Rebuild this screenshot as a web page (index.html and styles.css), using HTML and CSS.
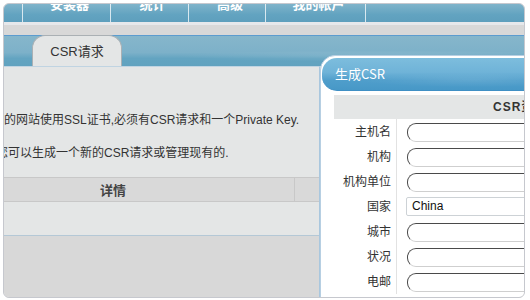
FILE: index.html
```html
<!DOCTYPE html>
<html lang="zh">
<head>
<meta charset="utf-8">
<title>CSR请求</title>
<link rel="stylesheet" href="styles.css">
</head>
<body>
<div class="frame">
  <nav class="nav">
    <div class="nav-lead"></div>
    <div class="nav-item w1"><span>安装器</span></div>
    <div class="nav-item w2"><span>统计</span></div>
    <div class="nav-item w3"><span>高级</span></div>
    <div class="nav-item w4 last"><span>我的帐户</span></div>
  </nav>
  <div class="strip"></div>
  <div class="band"></div>
  <div class="tabbar">
    <div class="tab">CSR请求</div>
  </div>
  <main class="panel">
    <div class="intro">
      <p class="line line1">要让您的网站使用SSL证书,必须有CSR请求和一个Private Key.</p>
      <p class="line line2">在这里您可以生成一个新的CSR请求或管理现有的.</p>
    </div>
    <div class="thead">
      <div class="th main">详情</div>
      <div class="th side"></div>
    </div>
    <div class="trow"></div>
    <div class="foot"></div>
  </main>

  <section class="dialog">
    <div class="dlg-head">生成CSR</div>
    <div class="dlg-body">
      <div class="sec-head">CSR资料</div>
      <div class="form">
        <div class="lbl">主机名</div><div class="fld"><span class="inp"></span></div>
        <div class="lbl">机构</div><div class="fld"><span class="inp"></span></div>
        <div class="lbl">机构单位</div><div class="fld"><span class="inp"></span></div>
        <div class="lbl">国家</div><div class="fld"><span class="sel">China</span></div>
        <div class="lbl">城市</div><div class="fld"><span class="inp"></span></div>
        <div class="lbl">状况</div><div class="fld"><span class="inp"></span></div>
        <div class="lbl">电邮</div><div class="fld"><span class="inp"></span></div>
      </div>
    </div>
  </section>
</div>
</body>
</html>
```
FILE: styles.css
```css
html, body {
  margin: 0;
  padding: 0;
  background: #ffffff;
}
body {
  font-family: "Liberation Sans", "Noto Sans CJK SC", sans-serif;
  font-size: 12px;
  color: #333;
}
.frame {
  position: relative;
  box-sizing: border-box;
  margin: 3px 0 0 3px;
  width: 522px;
  height: 295px;
  border: 1px solid #c6c8ce;
  border-radius: 6px;
  overflow: hidden;
  background: #d8d8d8;
}
.nav {
  display: flex;
  height: 18px;
  background: linear-gradient(#7fb3ca, #62a3c0 60%, #5e9fbd);
}
.nav-lead { width: 18px; }
.nav-item {
  display: flex;
  justify-content: center;
  align-items: flex-start;
  border-left: 1px solid rgba(255,255,255,0.75);
  color: #fff;
  font-weight: bold;
  font-size: 13px;
}
.nav-item span {
  margin-top: -6px;
  line-height: 13px;
  padding-left: 6px;
}
.nav-item.last { border-right: 1px solid rgba(255,255,255,0.75); }
.w1 { width: 87px; }
.w2 { width: 77px; }
.w3 { width: 76px; }
.w4 { width: 99px; }
.strip { height: 3px; background: #e6e8eb; }
.band { height: 10px; background: #d8d8d8; }
.tabbar {
  height: 30px;
  border-top: 1px solid #5c9ccf;
  background:
    radial-gradient(ellipse 300px 8px at 380px 20px, rgba(255,255,255,0.12), rgba(255,255,255,0) 70%),
    linear-gradient(#86b6cb, #7db1c9 55%, #63a4c1 75%, #61a2bf);
  display: flex;
  align-items: flex-end;
  padding-left: 28px;
}
.tab {
  box-sizing: border-box;
  width: 90px;
  height: 31px;
  border: 1px solid #aab0b4;
  border-bottom: none;
  border-radius: 13px 13px 0 0;
  background: #e4e6e6;
  color: #333;
  font-size: 13px;
  text-align: center;
  line-height: 32px;
}
.panel {
  box-sizing: border-box;
  width: 316px;
  height: 231px;
  border-right: 1px solid #a9c7de;
  border-top: 1px solid #c0d4e2;
  background: #e4e6e6;
  display: flex;
  flex-direction: column;
  border-bottom-left-radius: 5px;
  overflow: hidden;
}
.intro {
  height: 110px;
  padding-top: 45px;
  box-sizing: border-box;
  white-space: nowrap;
}
.line {
  margin: 0;
  line-height: 16px;
  font-size: 12px;
  color: #333;
}
.line1 { margin-left: -36px; }
.line2 { margin-left: -44px; margin-top: 17px; }
.thead {
  display: flex;
  height: 25px;
  box-sizing: border-box;
  border-top: 1px solid #c8c8c8;
  border-bottom: 1px solid #c8c8c8;
  background: #d9d9d9;
}
.th {
  display: flex;
  align-items: center;
  font-weight: bold;
  font-size: 13px;
  color: #444;
}
.th.main {
  width: 291px;
  padding-left: 96px;
  box-sizing: border-box;
  border-right: 1px solid #c8c8c8;
}
.th.side { flex: 1; }
.trow {
  height: 33px;
  border-bottom: 1px solid #b4c8d6;
  background: #e4e6e6;
}
.foot {
  flex: 1;
  background: #d8d8d8;
}

/* dialog overlay */
.dialog {
  position: absolute;
  left: 316px;
  top: 51px;
  width: 320px;
  height: 260px;
  box-sizing: border-box;
  border: 1px solid #b7cfe2;
  border-radius: 15px 0 0 0;
  background: #fff;
  padding: 2px 0 0 1px;
}
.dlg-head {
  height: 33px;
  box-sizing: border-box;
  border-radius: 15px 0 0 15px;
  background:
    radial-gradient(ellipse 160px 10px at 150px 22px, rgba(255,255,255,0.10), rgba(255,255,255,0) 70%),
    linear-gradient(#7dbddd, #6fb3d8 45%, #4f9ecb 70%, #4798c7);
  border-bottom: 1px solid #3f8fc4;
  color: #fff;
  font-size: 13px;
  line-height: 31px;
  padding-left: 13px;
  font-family: "Noto Sans CJK SC", "Liberation Sans", sans-serif;
}
.dlg-body {
  padding: 4px 0 0 12px;
}
.sec-head {
  height: 24px;
  background: #e4e6e6;
  padding-left: 159px;
  line-height: 24px;
  font-weight: bold;
  font-size: 12px;
  letter-spacing: 1px;
  color: #333;
  white-space: nowrap;
}
.form {
  display: grid;
  grid-template-columns: 63px 1fr;
  grid-auto-rows: 25px;
}
.lbl {
  text-align: right;
  padding-right: 5px;
  line-height: 24px;
  font-size: 12px;
  color: #333;
  border-right: 1px solid #e2e2e2;
  font-family: "Noto Sans CJK SC", "Liberation Sans", sans-serif;
}
.fld {
  display: flex;
  align-items: center;
  padding-left: 10px;
}
.inp {
  display: block;
  box-sizing: border-box;
  width: 200px;
  height: 19px;
  margin-top: 2px;
  border-top: 1px solid #4a4a4a;
  border-left: 1px solid #4a4a4a;
  border-bottom: 1px solid #cfcfcf;
  border-radius: 9px 0 0 9px;
  background: #fff;
}
.sel {
  display: block;
  box-sizing: border-box;
  width: 200px;
  height: 19px;
  margin-left: -1px;
  border: 1px solid #cdd2d6;
  border-radius: 2px;
  padding-left: 5px;
  line-height: 17px;
  font-size: 12px;
  color: #111;
  font-family: "Liberation Sans", sans-serif;
}
```
